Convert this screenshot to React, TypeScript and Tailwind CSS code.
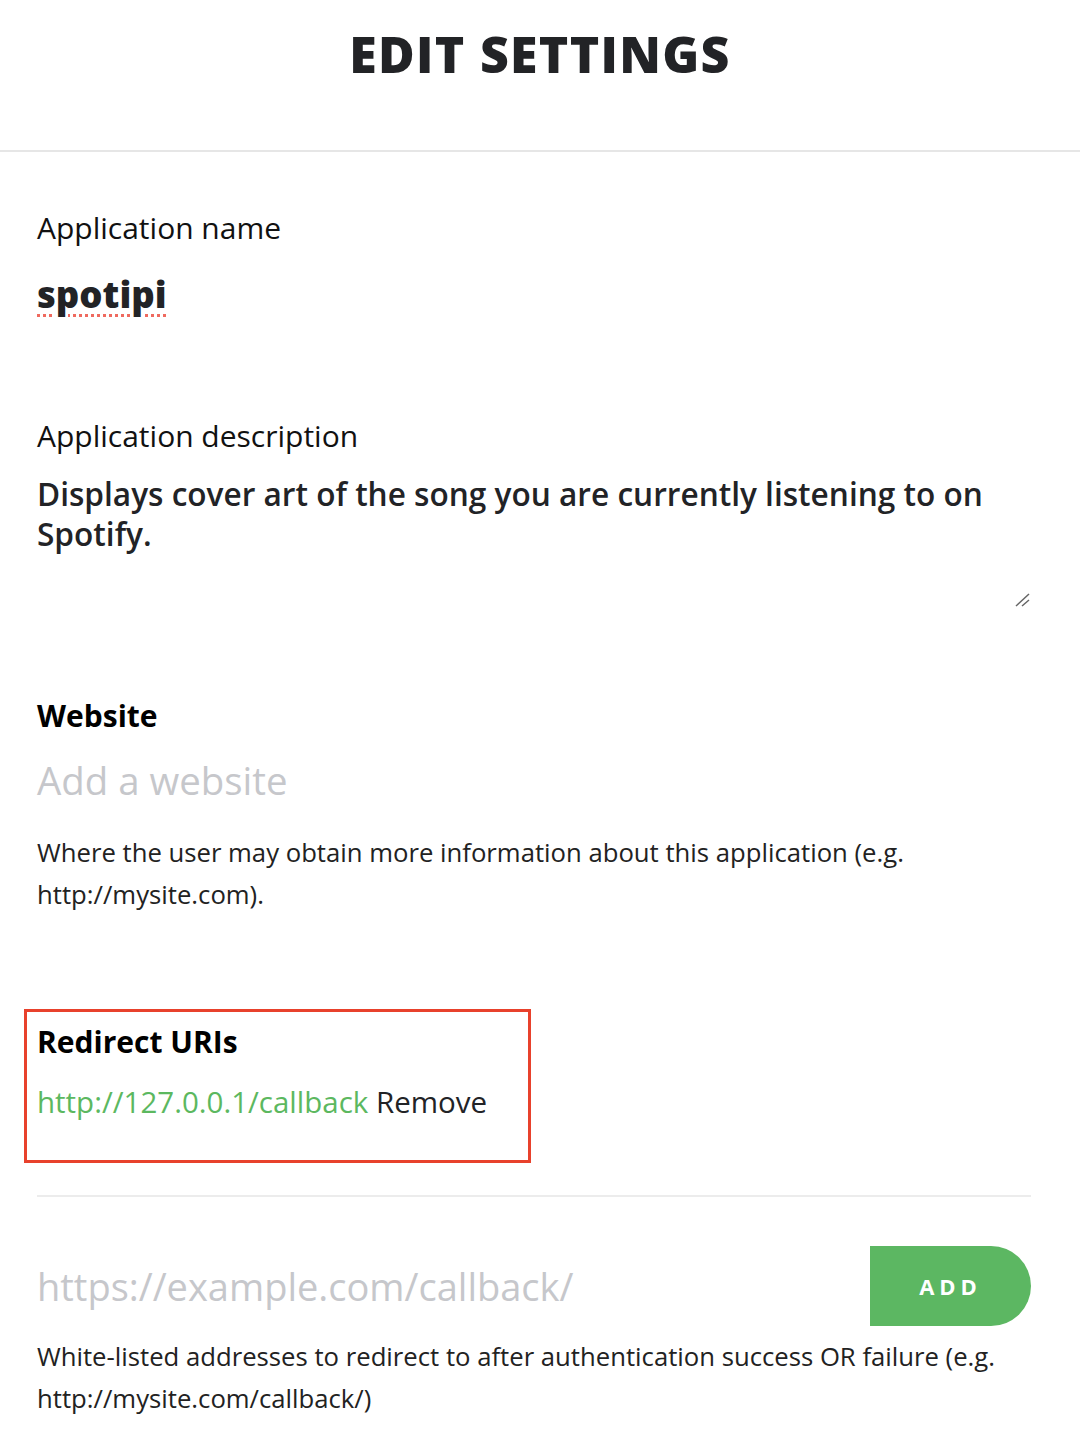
const font = "font-['Open_Sans','Lato',sans-serif]";

export default function App() {
  return (
    <div className={`w-[1080px] min-h-[1438px] bg-white text-[#181818] ${font}`}>
      <header className="h-[152px] border-b-2 border-[#e6e6e6] flex justify-center pt-[24px]">
        <h1 className="text-[50px] leading-[60px] font-extrabold tracking-[1.3px] text-[#222326]">
          EDIT SETTINGS
        </h1>
      </header>

      <main className="pl-[37px] pr-[49px]">
        <section className="pt-[56px]">
          <label className="block text-[30px] leading-[40px] text-[#111]">Application name</label>
          <div className="mt-[24px] text-[36.5px] leading-[44px] font-extrabold text-[#222326]">
            <span className="underline decoration-dotted decoration-[#ef6a5f] decoration-[3px] underline-offset-[6px]">
              spotipi
            </span>
          </div>
        </section>

        <section className="pt-[100px]">
          <label className="block text-[30px] leading-[40px] text-[#111]">Application description</label>
          <div className="relative h-[160px] mt-[18px]">
            <p className="text-[31.6px] leading-[40px] font-semibold text-[#222326]">
              Displays cover art of the song you are currently listening to on Spotify.
            </p>
            <svg className="absolute right-0 bottom-[27px]" width="16" height="14" viewBox="0 0 16 14">
              <path d="M1 13 L14 1 M7 13 L14 7" stroke="#666" strokeWidth="1.5" />
            </svg>
          </div>
        </section>

        <section className="pt-[62px]">
          <h2 className="text-[30px] leading-[40px] font-bold text-black">Website</h2>
          <div className="mt-[22px] text-[38.4px] leading-[44px] text-[#c6c7cb]">Add a website</div>
          <p className="mt-[30px] text-[25.7px] leading-[42px] text-[#222]">
            Where the user may obtain more information about this application (e.g. http://mysite.com).
          </p>
        </section>

        <section className="mt-[93px] -ml-[13px] w-[507px] h-[154px] border-[3px] border-[#e8412c] pl-[10px] pt-[10px]">
          <h2 className="text-[30px] leading-[40px] font-bold text-black">Redirect URIs</h2>
          <div className="mt-[20px] text-[29.5px] leading-[40px]">
            <span className="text-[#5cb85f]">http://127.0.0.1/callback</span>{" "}
            <span className="text-[#222326]">Remove</span>
          </div>
        </section>

        <div className="mt-[32px] border-t-2 border-[#ececec]" />

        <div className="mt-[49px] flex items-center justify-between">
          <div className="text-[38px] leading-[44px] text-[#c6c7cb]">https://example.com/callback/</div>
          <button className="w-[161px] h-[80px] bg-[#5cb762] rounded-r-full text-white text-[22px] font-bold tracking-[5px]">
            ADD
          </button>
        </div>
        <p className="mt-[10px] text-[25.7px] leading-[42px] text-[#222]">
          White-listed addresses to redirect to after authentication success OR failure (e.g.
          http://mysite.com/callback/)
        </p>
      </main>
    </div>
  );
}
